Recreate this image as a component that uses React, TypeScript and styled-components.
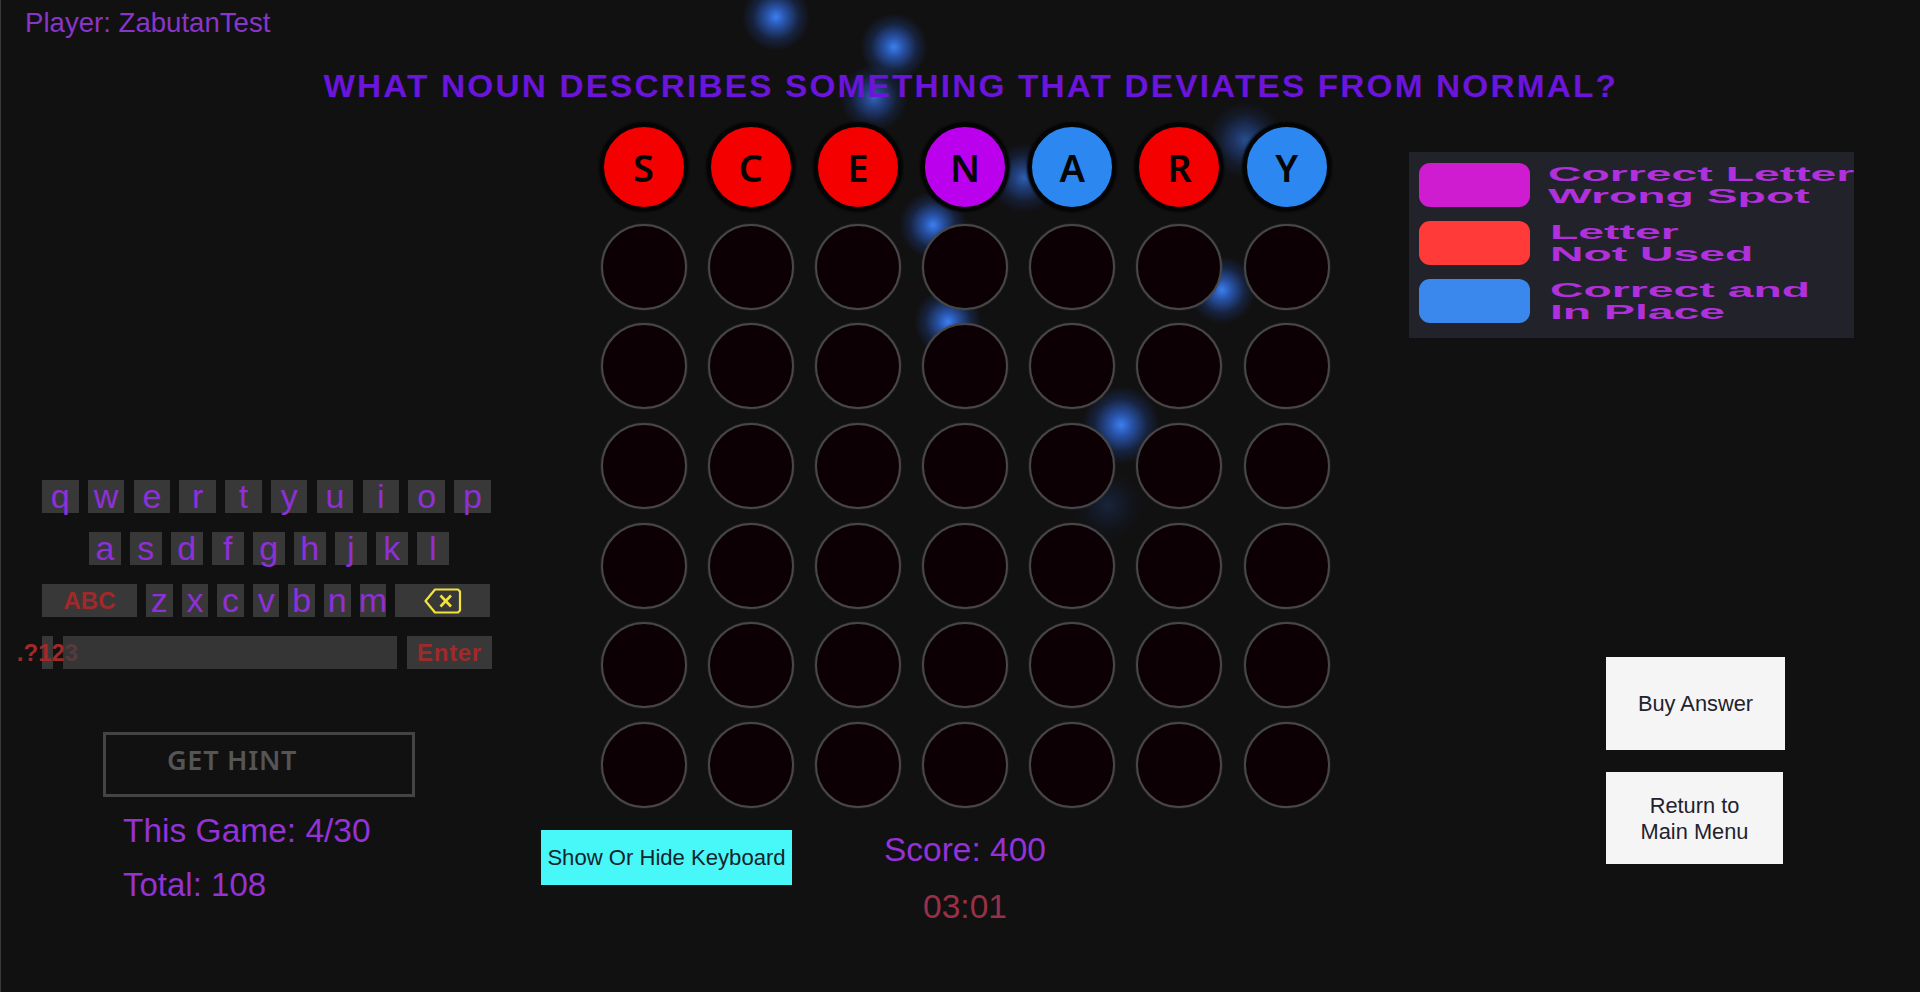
import React from 'react';
import styled, { createGlobalStyle } from 'styled-components';

const GlobalStyle = createGlobalStyle`
  html, body {
    margin: 0;
    padding: 0;
    background: #111112;
  }
`;

const Page = styled.div`
  position: relative;
  width: 1920px;
  height: 992px;
  overflow: hidden;
  box-sizing: border-box;
  border-left: 1px solid #3a3a3a;
  background: #111112;
  font-family: 'Liberation Sans', Arial, sans-serif;
`;

const Glow = styled.div<{ $x: number; $y: number; $size?: number; $alpha?: number }>`
  position: absolute;
  left: ${(p) => p.$x - (p.$size ?? 68) / 2}px;
  top: ${(p) => p.$y - (p.$size ?? 68) / 2}px;
  width: ${(p) => p.$size ?? 68}px;
  height: ${(p) => p.$size ?? 68}px;
  border-radius: 50%;
  opacity: ${(p) => p.$alpha ?? 1};
  background: radial-gradient(circle, #3b7ff0 0%, rgba(50, 110, 230, 0.7) 20%, rgba(40, 90, 200, 0.24) 48%, rgba(30, 70, 170, 0) 70%);
`;

const Content = styled.div`
  position: relative;
`;

const PlayerName = styled.div`
  padding-left: 24px;
  font-size: 27.6px;
  line-height: 46px;
  color: #8a35c9;
`;

const Question = styled.h1`
  margin: 21px 0 19px;
  padding-left: 19.6px;
  text-align: center;
  font-size: 32px;
  line-height: 38px;
  font-weight: 700;
  letter-spacing: 2.05px;
  color: #6a14dc;
  transform: scaleX(1.044);
`;

const Main = styled.div`
  display: grid;
  grid-template-columns: 540px 868px 1fr;
`;

const LeftColumn = styled.div`
  padding: 356px 0 0 41px;
`;

const Keyboard = styled.div`
  display: flex;
  flex-direction: column;
  gap: 19px;
  width: 449px;
`;

const KeyRow = styled.div<{ $gap: number; $indent?: number }>`
  display: flex;
  gap: ${(p) => p.$gap}px;
  padding-left: ${(p) => p.$indent ?? 0}px;
`;

const Key = styled.div<{ $w: number }>`
  flex: none;
  display: flex;
  justify-content: center;
  align-items: center;
  width: ${(p) => p.$w}px;
  height: 33px;
  background: #383838;
  font-size: 34px;
  line-height: 33px;
  color: #8e30d8;
`;

const ActionKey = styled(Key)<{ $spacing?: number }>`
  font-size: 24px;
  font-weight: 700;
  letter-spacing: ${(p) => p.$spacing ?? 0}px;
  color: #a02a2a;
  white-space: nowrap;
`;

const SpaceKey = styled(Key)`
  position: relative;
  background: rgba(64, 64, 64, 0.78);
`;

const HintBox = styled.div`
  box-sizing: border-box;
  width: 312px;
  height: 65px;
  margin: 63px 0 0 61px;
  padding: 7px 0 0 61px;
  border: 3px solid #444;
  font-family: 'Noto Sans', sans-serif;
  font-size: 27px;
  line-height: 36px;
  font-weight: 600;
  letter-spacing: 0.75px;
  color: #555;
`;

const Stats = styled.div`
  display: flex;
  flex-direction: column;
  gap: 14px;
  margin: 14px 0 0 81px;
  line-height: 40px;
  color: #9432d6;
`;

const StatLine = styled.div<{ $size: number }>`
  font-size: ${(p) => p.$size}px;
`;

const CenterColumn = styled.div`
  display: flex;
  flex-direction: column;
`;

const Board = styled.div`
  display: grid;
  grid-template-columns: repeat(7, 86px);
  grid-auto-rows: 86px;
  column-gap: 21.2px;
  row-gap: 13.7px;
  padding-left: 59.5px;
`;

const Slot = styled.div<{ $tone?: string }>`
  box-sizing: border-box;
  display: flex;
  justify-content: center;
  align-items: center;
  border-radius: 50%;
  border: ${(p) => (p.$tone ? '3px solid #050505' : '2.5px solid #474747')};
  box-shadow: ${(p) => (p.$tone ? '0 0 2px 2px #050505' : '0 0 1.5px #444')};
  background: ${(p) => p.$tone ?? '#0c0004'};
  font-family: 'Noto Sans', sans-serif;
  font-size: 38px;
  font-weight: 600;
  color: #060606;
`;

const BoardFooter = styled.div`
  display: flex;
  align-items: flex-start;
  margin-top: 22px;
`;

const KeyboardToggle = styled.div`
  display: flex;
  justify-content: center;
  align-items: center;
  width: 251px;
  height: 55px;
  background: #48f8f8;
  font-size: 22.1px;
  color: #16242c;
`;

const ScoreBlock = styled.div`
  display: flex;
  flex-direction: column;
  align-items: center;
  gap: 17px;
  width: 162px;
  margin-left: 92px;
  font-size: 33.5px;
  line-height: 40px;
  white-space: nowrap;
`;

const Score = styled.div`
  color: #9432d6;
`;

const Timer = styled.div`
  color: #9a3048;
`;

const RightColumn = styled.div`
  display: flex;
  flex-direction: column;
`;

const Legend = styled.div`
  box-sizing: border-box;
  display: flex;
  flex-direction: column;
  gap: 14px;
  width: 445px;
  height: 186px;
  margin-top: 28px;
  padding: 11px 10px;
  overflow: hidden;
  background: #22222a;
`;

const LegendRow = styled.div`
  display: flex;
  align-items: center;
  gap: 18px;
  height: 44px;
`;

const Swatch = styled.div<{ $tone: string }>`
  flex: none;
  width: 111px;
  height: 44px;
  border-radius: 11px;
  background: ${(p) => p.$tone};
`;

const LegendLabel = styled.div<{ $indent: number }>`
  margin-left: ${(p) => p.$indent}px;
  font-size: 20.5px;
  line-height: 22.5px;
  font-weight: 700;
  white-space: nowrap;
  color: #b030dc;
  transform: scaleX(2.26);
  transform-origin: left center;
`;

const MenuButton = styled.div<{ $w: number; $h: number; $top: number; $nudge?: number }>`
  box-sizing: border-box;
  display: flex;
  justify-content: center;
  align-items: center;
  width: ${(p) => p.$w}px;
  height: ${(p) => p.$h}px;
  margin: ${(p) => p.$top}px 0 0 197px;
  padding-top: ${(p) => p.$nudge ?? 0}px;
  background: #f5f5f5;
  font-size: 21.8px;
  line-height: 26px;
  text-align: center;
  color: #22222e;
`;

const glows = [
  { x: 775, y: 17 },
  { x: 893, y: 47 },
  { x: 873, y: 98, alpha: 0.75 },
  { x: 932, y: 225 },
  { x: 1023, y: 178, size: 70, alpha: 0.7 },
  { x: 1244, y: 140, size: 76, alpha: 0.55 },
  { x: 1221, y: 290 },
  { x: 947, y: 322 },
  { x: 1120, y: 425, size: 78 },
  { x: 1107, y: 505, size: 70, alpha: 0.18 },
];

const guess = [
  { letter: 'S', tone: '#f40000' },
  { letter: 'C', tone: '#f40000' },
  { letter: 'E', tone: '#f40000' },
  { letter: 'N', tone: '#bb00ee' },
  { letter: 'A', tone: '#2c88f0' },
  { letter: 'R', tone: '#f40000' },
  { letter: 'Y', tone: '#2c88f0' },
];

const legend = [
  { tone: '#d01cd0', indent: 0, lines: ['Correct Letter', 'Wrong Spot'] },
  { tone: '#ff3a38', indent: 2, lines: ['Letter', 'Not Used'] },
  { tone: '#3a88ee', indent: 2, lines: ['Correct and', 'In Place'] },
];

function BackspaceIcon() {
  return (
    <svg width="38" height="26" viewBox="0 0 38 26" fill="none" stroke="#f2e43c" strokeWidth="2.2">
      <path d="M1.5 13 L11 1.5 H34 L36 3.5 V22.5 L34 24.5 H11 Z" strokeLinejoin="round" />
      <path d="M16.5 7.5 L27 18.5 M27 7.5 L16.5 18.5" strokeWidth="2.6" />
    </svg>
  );
}

function App() {
  return (
    <Page>
      <GlobalStyle />
      {glows.map((g, i) => (
        <Glow key={i} $x={g.x} $y={g.y} $size={g.size} $alpha={g.alpha} />
      ))}
      <Content>
        <PlayerName>Player: ZabutanTest</PlayerName>
        <Question>WHAT NOUN DESCRIBES SOMETHING THAT DEVIATES FROM NORMAL?</Question>
        <Main>
          <LeftColumn>
            <Keyboard>
              <KeyRow $gap={9.3}>
                {'qwertyuiop'.split('').map((k) => (
                  <Key key={k} $w={36.5}>{k}</Key>
                ))}
              </KeyRow>
              <KeyRow $gap={9.3} $indent={47}>
                {'asdfghjkl'.split('').map((k) => (
                  <Key key={k} $w={31.7}>{k}</Key>
                ))}
              </KeyRow>
              <KeyRow $gap={9.1}>
                <ActionKey $w={95}>ABC</ActionKey>
                {'zxcvbnm'.split('').map((k) => (
                  <Key key={k} $w={26.5}>{k}</Key>
                ))}
                <Key $w={95}><BackspaceIcon /></Key>
              </KeyRow>
              <KeyRow $gap={10}>
                <ActionKey $w={11}>.?123</ActionKey>
                <SpaceKey $w={334} />
                <ActionKey $w={85} $spacing={0.7}>Enter</ActionKey>
              </KeyRow>
            </Keyboard>
            <HintBox>GET HINT</HintBox>
            <Stats>
              <StatLine $size={33.5}>This Game: 4/30</StatLine>
              <StatLine $size={33}>Total: 108</StatLine>
            </Stats>
          </LeftColumn>
          <CenterColumn>
            <Board>
              {guess.map((g, i) => (
                <Slot key={i} $tone={g.tone}>{g.letter}</Slot>
              ))}
              {Array.from({ length: 42 }).map((_, i) => (
                <Slot key={`empty-${i}`} />
              ))}
            </Board>
            <BoardFooter>
              <KeyboardToggle>Show Or Hide Keyboard</KeyboardToggle>
              <ScoreBlock>
                <Score>Score: 400</Score>
                <Timer>03:01</Timer>
              </ScoreBlock>
            </BoardFooter>
          </CenterColumn>
          <RightColumn>
            <Legend>
              {legend.map((row) => (
                <LegendRow key={row.tone}>
                  <Swatch $tone={row.tone} />
                  <LegendLabel $indent={row.indent}>
                    {row.lines.map((line) => (
                      <div key={line}>{line}</div>
                    ))}
                  </LegendLabel>
                </LegendRow>
              ))}
            </Legend>
            <MenuButton $w={179} $h={93} $top={319}>Buy Answer</MenuButton>
            <MenuButton $w={177} $h={92} $top={22} $nudge={2}>Return to<br />Main Menu</MenuButton>
          </RightColumn>
        </Main>
      </Content>
    </Page>
  );
}

export default App;
